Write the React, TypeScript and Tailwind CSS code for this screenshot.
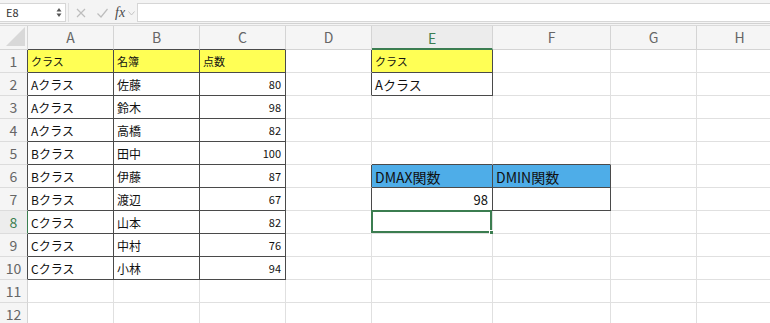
import React from 'react';

type Cell = { t: string; num?: boolean; size: string; bg?: string };

const colW = ['A', 'B', 'C', 'D', 'E', 'F', 'G', 'H'];

const names = [
  ['Aクラス', '佐藤', '80'],
  ['Aクラス', '鈴木', '98'],
  ['Aクラス', '高橋', '82'],
  ['Bクラス', '田中', '100'],
  ['Bクラス', '伊藤', '87'],
  ['Bクラス', '渡辺', '67'],
  ['Cクラス', '山本', '82'],
  ['Cクラス', '中村', '76'],
  ['Cクラス', '小林', '94'],
];

const cells: Record<string, Cell> = {
  '1,1': { t: 'クラス', size: 'text-[11px]', bg: 'bg-[#ffff55]' },
  '1,2': { t: '名簿', size: 'text-[11px]', bg: 'bg-[#ffff55]' },
  '1,3': { t: '点数', size: 'text-[11px]', bg: 'bg-[#ffff55]' },
  '1,5': { t: 'クラス', size: 'text-[11px]', bg: 'bg-[#ffff55]' },
  '2,5': { t: 'Aクラス', size: 'text-[13px]' },
  '6,5': { t: 'DMAX関数', size: 'text-[14px]', bg: 'bg-[#4eade8]' },
  '6,6': { t: 'DMIN関数', size: 'text-[14px]', bg: 'bg-[#4eade8]' },
  '7,5': { t: '98', num: true, size: 'text-[13px]' },
};
names.forEach(([a, b, c], i) => {
  cells[`${i + 2},1`] = { t: a, size: 'text-[12px]' };
  cells[`${i + 2},2`] = { t: b, size: 'text-[12px]' };
  cells[`${i + 2},3`] = { t: c, num: true, size: 'text-[11px]' };
});

// ranges with black borders
const dark = (r: number, c: number) =>
  (r >= 1 && r <= 10 && c >= 1 && c <= 3) ||
  (c === 5 && r >= 1 && r <= 2) ||
  (r >= 6 && r <= 7 && (c === 5 || c === 6));

const SEL_R = 8;
const SEL_C = 5;

function FormulaBar() {
  return (
    <div className="flex h-[24px] items-start border-b border-[#d2d2d2] bg-[#f4f4f4] pt-[3px]">
      {/* name box */}
      <div className="flex h-[19px] w-[66px] items-center justify-between border border-l-0 border-[#d6d6d6] bg-white pl-[6px] pr-[3px] text-[11px] text-[#333]">
        <span>E8</span>
        <svg width="6" height="11" viewBox="0 0 6 11">
          <path d="M3 1 L5.5 4.5 L0.5 4.5 Z" fill="#555" />
          <path d="M3 10 L5.5 6.5 L0.5 6.5 Z" fill="#555" />
        </svg>
      </div>
      <div className="ml-[2px] h-[19px] w-px bg-[#e0e0e0]" />
      {/* cancel / enter / fx */}
      <div className="flex h-[19px] items-center">
        <svg width="12" height="12" viewBox="0 0 12 12" className="ml-[6px]">
          <path d="M2 2 L10 10 M10 2 L2 10" stroke="#bdbdbd" strokeWidth="1.2" fill="none" />
        </svg>
        <svg width="13" height="12" viewBox="0 0 13 12" className="ml-[9px]">
          <path d="M1.5 6.5 L5 10 L11.5 2" stroke="#bdbdbd" strokeWidth="1.2" fill="none" />
        </svg>
        <span className="ml-[6px] font-['Liberation_Serif',serif] text-[14px] italic leading-none text-[#4a4a4a]">
          fx
        </span>
        <svg width="7" height="5" viewBox="0 0 7 5" className="ml-[3px] mt-[2px]">
          <path d="M0.5 0.5 L3.5 4 L6.5 0.5" stroke="#c4c4c4" strokeWidth="1" fill="none" />
        </svg>
      </div>
      <div className="ml-[2px] h-[19px] flex-1 border border-r-0 border-[#d6d6d6] bg-white" />
    </div>
  );
}

function Corner() {
  return (
    <div className="flex items-end justify-end border-b border-r border-[#d4d4d4] bg-[#f5f5f5] pb-[2px] pr-[1px]">
      <svg width="20" height="20" viewBox="0 0 20 20">
        <path d="M19 0 L19 19 L0 19 Z" fill="#d8d8d8" />
      </svg>
    </div>
  );
}

export default function App() {
  const rows = Array.from({ length: 12 }, (_, i) => i + 1);

  return (
    <div className="h-[323px] w-[770px] overflow-hidden bg-white font-['Noto_Sans_CJK_JP',sans-serif]">
      <FormulaBar />
      <div className="h-[2px] border-b border-[#dadada] bg-[#f4f4f4]" />

      <div className="grid grid-cols-[28px_86px_86px_86px_86px_121px_118px_86px_86px] grid-rows-[24px_repeat(12,23px)]">
        {/* column headers */}
        <Corner />
        {colW.map((l, i) => {
          const c = i + 1;
          const sel = c === SEL_C;
          return (
            <div
              key={l}
              className={
                'flex items-center justify-center border-r text-[14px] ' +
                (sel
                  ? 'border-b-2 border-r-[#d4d4d4] border-b-[#3b7d50] bg-[#ececec] pt-[2px] text-[#3b7d50]'
                  : dark(1, c)
                  ? 'border-b border-r-[#d4d4d4] border-b-[#4a4a4a] bg-[#f5f5f5] text-[#666]'
                  : 'border-b border-r-[#d4d4d4] border-b-[#d4d4d4] bg-[#f5f5f5] text-[#666]')
              }
            >
              {l}
            </div>
          );
        })}

        {rows.map((r) => (
          <React.Fragment key={r}>
            <div
              className={
                'flex items-center justify-center border-b border-r border-b-[#dcdcdc] text-[14px] ' +
                (r === SEL_R
                  ? 'border-r-[#3b7d50] bg-[#ededed] text-[#3b7d50]'
                  : dark(r, 1)
                  ? 'border-r-[#4a4a4a] bg-[#f5f5f5] text-[#666]'
                  : 'border-r-[#d4d4d4] bg-[#f5f5f5] text-[#666]')
              }
            >
              {r}
            </div>
            {colW.map((l, i) => {
              const c = i + 1;
              const cell = cells[`${r},${c}`];
              const rightDark = dark(r, c) || dark(r, c + 1);
              const bottomDark = dark(r, c) || dark(r + 1, c);
              return (
                <div
                  key={l}
                  className={
                    'relative flex items-center border-b border-r px-[3px] text-[#111] ' +
                    (rightDark ? 'border-r-[#4a4a4a] ' : 'border-r-[#e0e0e0] ') +
                    (bottomDark ? 'border-b-[#4a4a4a] ' : 'border-b-[#e0e0e0] ') +
                    (cell ? `${cell.size} ${cell.bg ?? ''} ${cell.num ? 'justify-end pr-[4px]' : ''}` : '')
                  }
                >
                  {cell && <span className="pt-[1px] leading-none">{cell.t}</span>}
                  {r === SEL_R && c === SEL_C && (
                    <div className="absolute -left-px -top-px bottom-0 right-0 border-2 border-[#3b7d50]">
                      <div className="absolute -bottom-[4px] -right-[4px] h-[5px] w-[5px] border border-white bg-[#3b7d50]" />
                    </div>
                  )}
                </div>
              );
            })}
          </React.Fragment>
        ))}
      </div>
    </div>
  );
}
